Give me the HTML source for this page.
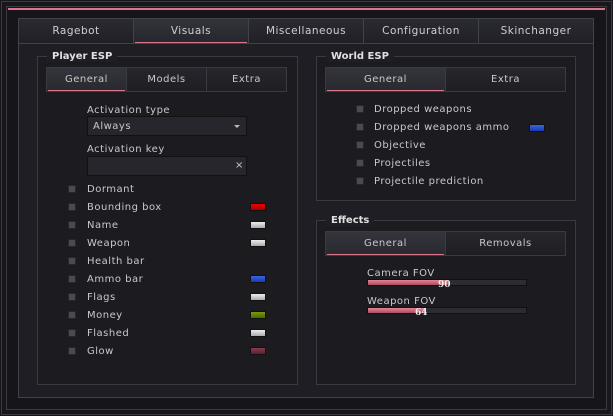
<!DOCTYPE html><html><head><style>
*{margin:0;padding:0;box-sizing:border-box}
body{width:613px;height:416px;background:#17171c;font-family:"DejaVu Sans","Liberation Sans",sans-serif;font-size:10px;color:#c9c9cc;position:relative;overflow:hidden;letter-spacing:.5px}
.a{position:absolute}
.frame{left:1px;top:1px;width:611px;height:414px;border:1px solid #3a3a42}
.frame2{left:6px;top:6px;width:601px;height:404px;border:1px solid #3a3a42;background:#15151a}
.pink{left:8px;top:8px;width:597px;height:2px;background:#d9768a}
.panel{left:18px;top:18px;width:576px;height:380px;border:1px solid #42424b;background:#1e1e24}
.tab{top:18px;height:26px;border:1px solid #42424b;background:linear-gradient(#2a2a31,#202026);text-align:center;line-height:25px;font-size:10.5px;color:#cfcfd2}
.tab.on{background:linear-gradient(#33333b,#26262d)}
.tab.on:after,.st.on:after{content:"";position:absolute;left:1px;right:1px;bottom:0;height:1px;background:#d9768a}
.grp{border:1px solid #3a3a42;background:#1b1b20}
.gt{font-weight:bold;background:#1e1e24;padding:0 5px;font-size:10px;color:#e0e0e0;letter-spacing:0;padding-top:1px}
.st{top:0;height:25px;border:1px solid #3a3a42;background:linear-gradient(#26262c,#1e1e23);text-align:center;line-height:24px;position:absolute}
.st.on{background:linear-gradient(#34343c,#292930)}
.cb{width:8px;height:8px;background:#4a4a52;border:1px solid #26262c}
.lb{white-space:nowrap;padding-top:2px}
.sw{width:16px;height:8px;border:1px solid #111}
.box{border:1px solid #111;background:#26262c}
.sl{height:7px;background:#2c2c33;border:1px solid #111}
.fill{height:100%;background:linear-gradient(#e08596,#b04a60)}
.num{font-weight:bold;color:#eee;font-size:9px;font-family:"DejaVu Serif",serif;letter-spacing:0}
</style></head><body>
<div class="a frame"></div><div class="a frame2"></div><div class="a pink"></div>
<div class="a panel"></div>
<div class="a tab" style="left:18px;width:116px">Ragebot</div>
<div class="a tab on" style="left:133px;width:116px">Visuals</div>
<div class="a tab" style="left:248px;width:116px">Miscellaneous</div>
<div class="a tab" style="left:363px;width:116px">Configuration</div>
<div class="a tab" style="left:478px;width:116px">Skinchanger</div>

<div class="a grp" style="left:37px;top:56px;width:261px;height:329px"></div>
<div class="a gt" style="left:47px;top:50px">Player ESP</div>
<div class="a" style="left:46px;top:67px;width:242px;height:25px">
<div class="st on" style="left:0;width:81px">General</div><div class="st" style="left:80px;width:81px">Models</div><div class="st" style="left:160px;width:81px">Extra</div></div>
<div class="a lb" style="left:87px;top:103px">Activation type</div>
<div class="a box" style="left:87px;top:116px;width:160px;height:20px"></div>
<div class="a lb" style="left:93px;top:119px">Always</div>
<div class="a" style="left:234px;top:125px;border:3px solid transparent;border-top:3px solid #bbb"></div>
<div class="a lb" style="left:87px;top:142px">Activation key</div>
<div class="a box" style="left:87px;top:156px;width:160px;height:20px"></div>
<div class="a" style="left:235px;top:160px;font-size:10px">×</div>

<div class="a cb" style="left:68px;top:185px"></div><div class="a lb" style="left:87px;top:182px">Dormant</div>
<div class="a cb" style="left:68px;top:203px"></div><div class="a lb" style="left:87px;top:200px">Bounding box</div><div class="a sw" style="left:250px;top:203px;background:linear-gradient(#e00,#a00)"></div>
<div class="a cb" style="left:68px;top:221px"></div><div class="a lb" style="left:87px;top:218px">Name</div><div class="a sw" style="left:250px;top:221px;background:linear-gradient(#eee,#aaa)"></div>
<div class="a cb" style="left:68px;top:239px"></div><div class="a lb" style="left:87px;top:236px">Weapon</div><div class="a sw" style="left:250px;top:239px;background:linear-gradient(#eee,#aaa)"></div>
<div class="a cb" style="left:68px;top:257px"></div><div class="a lb" style="left:87px;top:254px">Health bar</div>
<div class="a cb" style="left:68px;top:275px"></div><div class="a lb" style="left:87px;top:272px">Ammo bar</div><div class="a sw" style="left:250px;top:275px;background:linear-gradient(#3a66e0,#1a3ab0)"></div>
<div class="a cb" style="left:68px;top:293px"></div><div class="a lb" style="left:87px;top:290px">Flags</div><div class="a sw" style="left:250px;top:293px;background:linear-gradient(#eee,#aaa)"></div>
<div class="a cb" style="left:68px;top:311px"></div><div class="a lb" style="left:87px;top:308px">Money</div><div class="a sw" style="left:250px;top:311px;background:linear-gradient(#7a9a10,#4a6a00)"></div>
<div class="a cb" style="left:68px;top:329px"></div><div class="a lb" style="left:87px;top:326px">Flashed</div><div class="a sw" style="left:250px;top:329px;background:linear-gradient(#eee,#aaa)"></div>
<div class="a cb" style="left:68px;top:347px"></div><div class="a lb" style="left:87px;top:344px">Glow</div><div class="a sw" style="left:250px;top:347px;background:linear-gradient(#8a3a50,#5a2030)"></div>

<div class="a grp" style="left:316px;top:56px;width:260px;height:145px"></div>
<div class="a gt" style="left:326px;top:50px">World ESP</div>
<div class="a" style="left:325px;top:67px;width:241px;height:25px">
<div class="st on" style="left:0;width:121px">General</div><div class="st" style="left:120px;width:121px">Extra</div></div>
<div class="a cb" style="left:356px;top:105px"></div><div class="a lb" style="left:374px;top:102px">Dropped weapons</div>
<div class="a cb" style="left:356px;top:123px"></div><div class="a lb" style="left:374px;top:120px">Dropped weapons ammo</div><div class="a sw" style="left:529px;top:124px;background:linear-gradient(#3a66e0,#1a3ab0)"></div>
<div class="a cb" style="left:356px;top:141px"></div><div class="a lb" style="left:374px;top:138px">Objective</div>
<div class="a cb" style="left:356px;top:159px"></div><div class="a lb" style="left:374px;top:156px">Projectiles</div>
<div class="a cb" style="left:356px;top:177px"></div><div class="a lb" style="left:374px;top:174px">Projectile prediction</div>

<div class="a grp" style="left:316px;top:220px;width:260px;height:165px"></div>
<div class="a gt" style="left:326px;top:214px">Effects</div>
<div class="a" style="left:325px;top:231px;width:241px;height:25px">
<div class="st on" style="left:0;width:121px">General</div><div class="st" style="left:120px;width:121px">Removals</div></div>
<div class="a lb" style="left:367px;top:266px">Camera FOV</div>
<div class="a sl" style="left:367px;top:279px;width:160px"><div class="fill" style="width:80px"></div></div>
<div class="a num" style="left:438px;top:280px">90</div>
<div class="a lb" style="left:367px;top:294px">Weapon FOV</div>
<div class="a sl" style="left:367px;top:307px;width:160px"><div class="fill" style="width:57px"></div></div>
<div class="a num" style="left:415px;top:308px">64</div>
</body></html>
